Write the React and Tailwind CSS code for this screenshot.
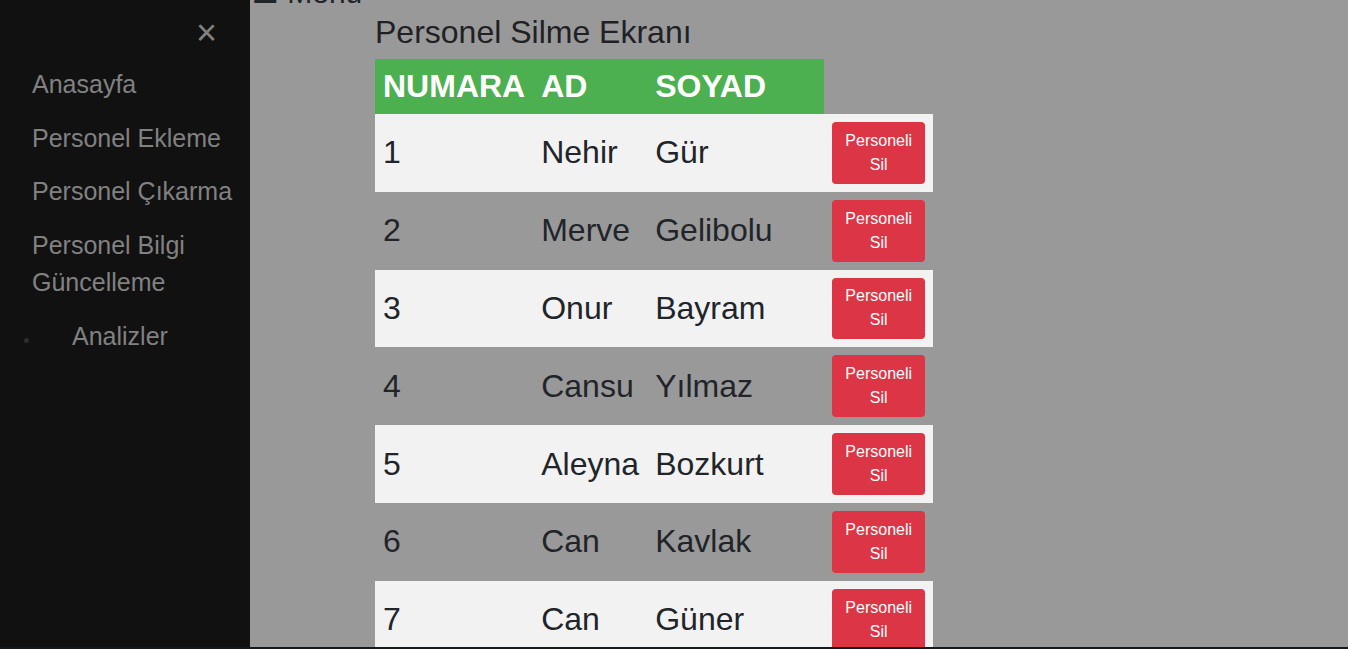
const personel = [
  { id: 1, ad: "Nehir", soyad: "Gür" },
  { id: 2, ad: "Merve", soyad: "Gelibolu" },
  { id: 3, ad: "Onur", soyad: "Bayram" },
  { id: 4, ad: "Cansu", soyad: "Yılmaz" },
  { id: 5, ad: "Aleyna", soyad: "Bozkurt" },
  { id: 6, ad: "Can", soyad: "Kavlak" },
  { id: 7, ad: "Can", soyad: "Güner" },
  { id: 8, ad: "Ece", soyad: "Demir" },
];

const links = ["Anasayfa", "Personel Ekleme", "Personel Çıkarma", "Personel Bilgi Güncelleme"];

function Sidebar() {
  return (
    <nav className="w-[250px] shrink-0 bg-[#111111] text-[#818181]">
      <div className="flex justify-end pr-[33px] pt-[6px] h-[58px]">
        <span className="text-[36px] leading-[54px] cursor-pointer">×</span>
      </div>
      {links.map((link) => (
        <a key={link} href="#" className="block py-[8px] pl-[32px] pr-[8px] text-[25px] leading-[37.5px]">
          {link}
        </a>
      ))}
      <ul className="list-disc pl-[40px] text-[16px] text-[#2c2c34] leading-[24px]">
        <li>
          <a href="#" className="inline-block py-[8px] pl-[32px] pr-[8px] text-[25px] leading-[37.5px] text-[#818181]">
            Analizler
          </a>
        </li>
      </ul>
    </nav>
  );
}

export default function App() {
  return (
    <div className="h-[649px] flex flex-col overflow-hidden font-['Liberation_Sans',Arial,sans-serif]">
      <div className="flex flex-1 min-h-0">
        <Sidebar />
        <main className="flex-1 bg-[#999999] text-[#212529] pl-[2px]">
          <div className="-mt-[30px] h-[45px] text-[30px] leading-[45px] cursor-pointer">
            <span className="font-['DejaVu_Sans',sans-serif]">☰</span> Menu
          </div>
          <div className="ml-[123px]">
            <h2 className="-mt-[2px] mb-[8px] text-[32px] leading-[38px] text-[#1f2124]">Personel Silme Ekranı</h2>
            <table className="border-collapse">
              <thead>
                <tr>
                  <th className="w-[158px] bg-[#4caf50] p-[8px] text-left text-[32px] leading-[39px] font-bold text-white">NUMARA</th>
                  <th className="w-[114px] bg-[#4caf50] p-[8px] text-left text-[32px] leading-[39px] font-bold text-white">AD</th>
                  <th className="w-[177px] bg-[#4caf50] p-[8px] text-left text-[32px] leading-[39px] font-bold text-white">SOYAD</th>
                </tr>
              </thead>
              <tbody>
                {personel.map((p, i) => (
                  <tr key={p.id} className={i % 2 === 0 ? "bg-[#f2f2f2]" : ""}>
                    <td className="p-[8px] text-[32px] leading-[45px] align-middle">{p.id}</td>
                    <td className="p-[8px] text-[32px] leading-[45px] align-middle">{p.ad}</td>
                    <td className="p-[8px] text-[32px] leading-[45px] align-middle">{p.soyad}</td>
                    <td className="p-[8px] align-middle">
                      <button className="w-[93px] h-[61.8px] rounded-[4px] bg-[#dc3545] px-[12px] text-[16px] leading-[24px] text-white">
                        Personeli Sil
                      </button>
                    </td>
                  </tr>
                ))}
              </tbody>
            </table>
          </div>
        </main>
      </div>
      <div className="h-[2px] bg-[#13191c]" />
    </div>
  );
}
